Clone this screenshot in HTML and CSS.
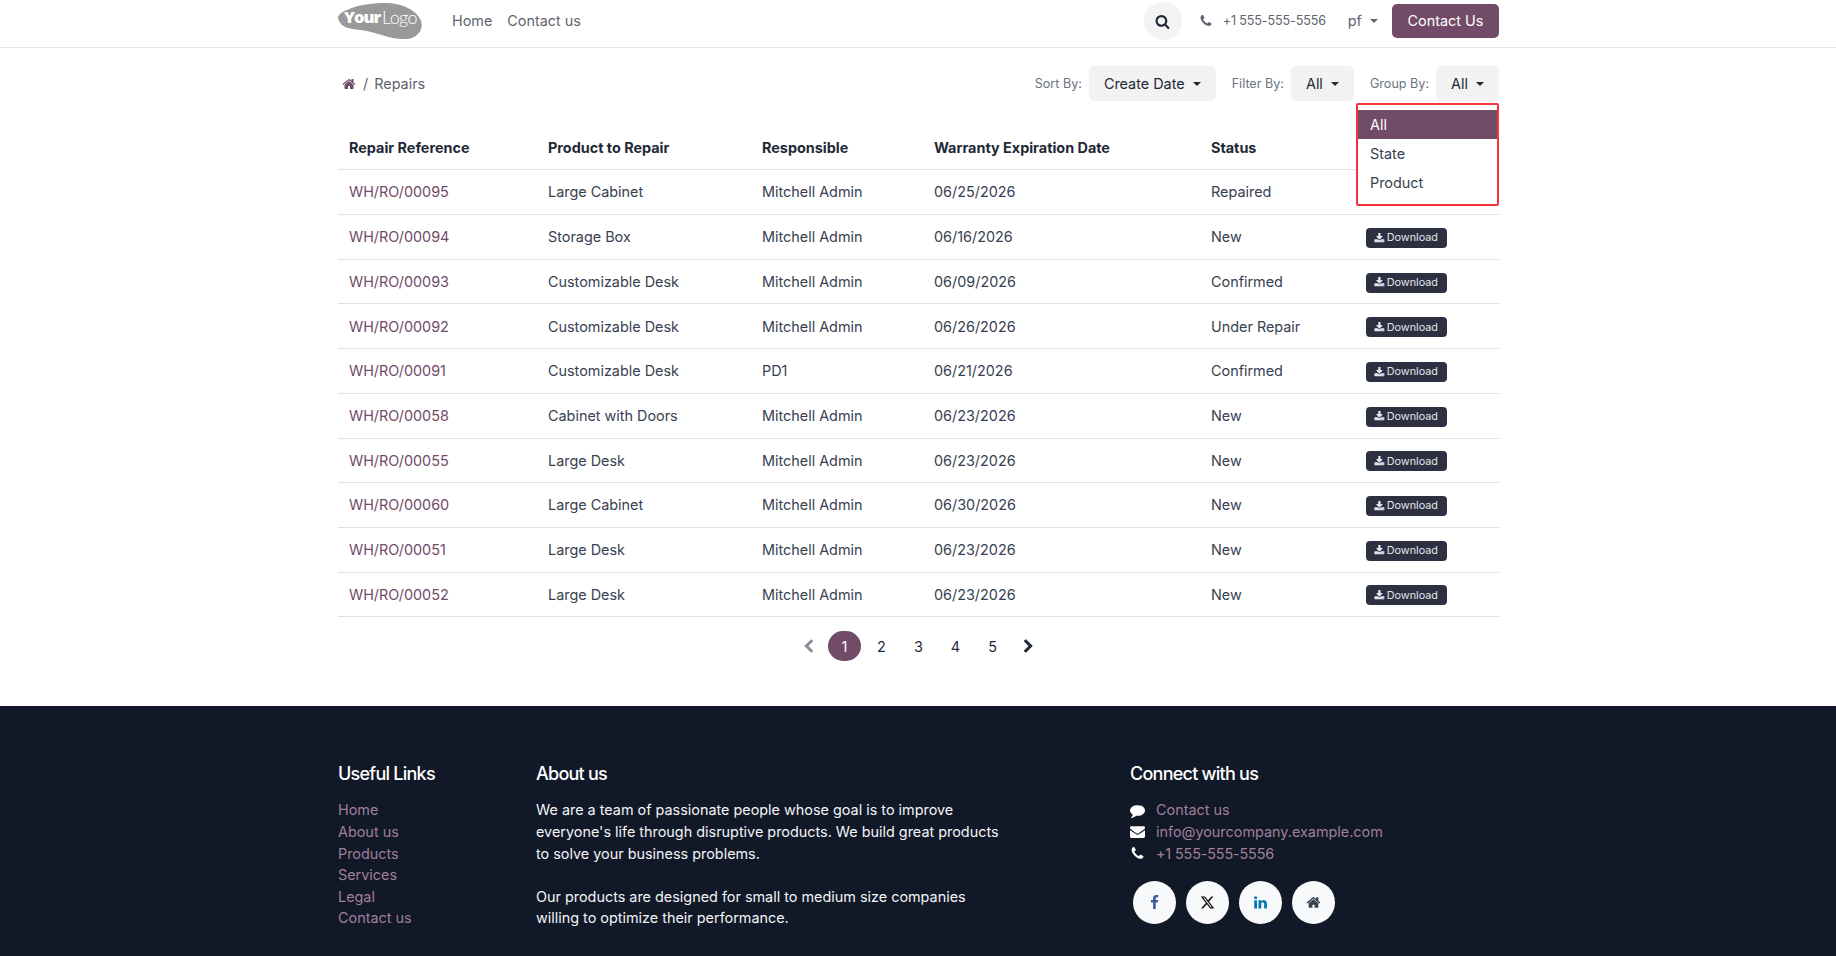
FILE: index.html
```html
<!DOCTYPE html>
<html lang="en">
<head>
    <meta charset="UTF-8">
    <title>Repairs</title>
    <link rel="stylesheet" href="styles.css">
</head>
<body>
    <svg class="sprite">
        <symbol id="i-home" viewBox="0 0 1792 1792"><path d="M1472 992v480q0 26-19 45t-45 19h-384v-384h-256v384h-384q-26 0-45-19t-19-45v-480q0-1 .5-3t.5-3l575-474 575 474q1 2 1 6zm223-69l-62 74q-8 9-21 11h-3q-13 0-21-7l-692-577-692 577q-12 8-24 7-13-2-21-11l-62-74q-8-10-7-23.500t11-21.500l719-599q32-26 76-26t76 26l244 204v-195q0-14 9-23t23-9h192q14 0 23 9t9 23v408l219 182q10 8 11 21.500t-7 23.500z"/></symbol>
        <symbol id="i-phone" viewBox="0 0 1792 1792"><path d="M1600 1240q0 27-10 70.500t-21 68.500q-21 50-122 106-94 51-186 51-27 0-53-3.500t-57.500-12.500-47-14.500-55.500-20.500-49-18q-98-35-175-83-127-79-264-216t-216-264q-48-77-83-175-3-9-18-49t-20.500-55.500-14.500-47-12.500-57.500-3.500-53q0-92 51-186 56-101 106-122 25-11 68.500-21t70.500-10q14 0 21 3 18 6 53 76 11 19 30 54t35 63.500 31 53.500q3 4 17.500 25t21.500 35.500 7 28.500q0 20-28.500 50t-62 55-62 53-28.500 46q0 9 5 22.500t8.500 20.500 14 24 11.500 19q76 137 174 235t235 174q2 1 19 11.500t24 14 20.500 8.500 22.500 5q18 0 46-28.500t53-62 55-62 50-28.500q14 0 28.500 7t35.500 21.500 25 17.500q25 15 53.500 31t63.500 35 54 30q70 35 76 53 3 7 3 21z"/></symbol>
        <symbol id="i-search" viewBox="0 0 1792 1792"><path d="M1216 832q0-185-131.500-316.500t-316.500-131.500-316.500 131.500-131.500 316.500 131.500 316.500 316.500 131.500 316.500-131.500 131.500-316.500zm512 832q0 52-38 90t-90 38q-54 0-90-38l-343-342q-179 124-399 124-143 0-273.500-55.500t-225-150-150-225-55.500-273.500 55.500-273.500 150-225 225-150 273.500-55.500 273.500 55.500 225 150 150 225 55.500 273.500q0 220-124 399l343 343q37 37 37 90z"/></symbol>
        <symbol id="i-download" viewBox="0 0 1792 1792"><path d="M1344 1344q0-26-19-45t-45-19-45 19-19 45 19 45 45 19 45-19 19-45zm256 0q0-26-19-45t-45-19-45 19-19 45 19 45 45 19 45-19 19-45zm128-224v320q0 40-28 68t-68 28h-1472q-40 0-68-28t-28-68v-320q0-40 28-68t68-28h465l135 136q58 56 136 56t136-56l136-136h464q40 0 68 28t28 68zm-325-569q17 41-14 70l-448 448q-18 19-45 19t-45-19l-448-448q-31-29-14-70 17-39 59-39h256v-448q0-26 19-45t45-19h256q26 0 45 19t19 45v448h256q42 0 59 39z"/></symbol>
    </svg>

    <header class="topbar">
        <div class="container topbar-row">
            <svg class="logo" viewBox="0 0 85 36">
                <path class="logo-blob" d="M0 14C2 10 5 8 9 7 20 2 33 0 47 0c17 0 32 7 36 18 3 9-4 17-14 18-13 1-24-4-36-7C22 26 9 27 4 22 2 20 0 17 0 14z"/>
                <text class="logo-your" x="6" y="20">Your</text>
                <text class="logo-logo" x="44" y="21">Logo</text>
            </svg>
            <nav class="topnav">
                <a href="#">Home</a>
                <a href="#">Contact us</a>
            </nav>
            <div class="topbar-right">
                <span class="search-btn"><svg class="icon"><use href="#i-search"/></svg></span>
                <svg class="icon phone-icon"><use href="#i-phone"/></svg>
                <span class="phone">+1 555-555-5556</span>
                <span class="lang">pf <i class="caret"></i></span>
                <a class="contact-btn" href="#">Contact Us</a>
            </div>
        </div>
    </header>

    <main class="container main">
        <div class="toolbar">
            <div class="breadcrumb">
                <svg class="icon home-icon"><use href="#i-home"/></svg>
                <span class="sep">/</span>
                <span>Repairs</span>
            </div>
            <div class="filters">
                <span class="filter-label">Sort By:</span>
                <span class="filter-btn">Create Date <i class="caret"></i></span>
                <span class="filter-label gap">Filter By:</span>
                <span class="filter-btn">All <i class="caret"></i></span>
                <span class="filter-label gap">Group By:</span>
                <span class="filter-btn">All <i class="caret"></i></span>
            </div>
            <ul class="dropdown">
                <li class="active">All</li>
                <li>State</li>
                <li>Product</li>
            </ul>
        </div>

        <table class="repairs">
            <thead>
                <tr>
                    <th class="c1">Repair Reference</th>
                    <th class="c2">Product to Repair</th>
                    <th class="c3">Responsible</th>
                    <th class="c4">Warranty Expiration Date</th>
                    <th class="c5">Status</th>
                    <th></th>
                </tr>
            </thead>
            <tbody>
                <tr><td><a href="#">WH/RO/00095</a></td><td>Large Cabinet</td><td>Mitchell Admin</td><td>06/25/2026</td><td>Repaired</td><td></td></tr>
                <tr><td><a href="#">WH/RO/00094</a></td><td>Storage Box</td><td>Mitchell Admin</td><td>06/16/2026</td><td>New</td><td><a class="dl" href="#"><svg class="icon"><use href="#i-download"/></svg>Download</a></td></tr>
                <tr><td><a href="#">WH/RO/00093</a></td><td>Customizable Desk</td><td>Mitchell Admin</td><td>06/09/2026</td><td>Confirmed</td><td><a class="dl" href="#"><svg class="icon"><use href="#i-download"/></svg>Download</a></td></tr>
                <tr><td><a href="#">WH/RO/00092</a></td><td>Customizable Desk</td><td>Mitchell Admin</td><td>06/26/2026</td><td>Under Repair</td><td><a class="dl" href="#"><svg class="icon"><use href="#i-download"/></svg>Download</a></td></tr>
                <tr><td><a href="#">WH/RO/00091</a></td><td>Customizable Desk</td><td>PD1</td><td>06/21/2026</td><td>Confirmed</td><td><a class="dl" href="#"><svg class="icon"><use href="#i-download"/></svg>Download</a></td></tr>
                <tr><td><a href="#">WH/RO/00058</a></td><td>Cabinet with Doors</td><td>Mitchell Admin</td><td>06/23/2026</td><td>New</td><td><a class="dl" href="#"><svg class="icon"><use href="#i-download"/></svg>Download</a></td></tr>
                <tr><td><a href="#">WH/RO/00055</a></td><td>Large Desk</td><td>Mitchell Admin</td><td>06/23/2026</td><td>New</td><td><a class="dl" href="#"><svg class="icon"><use href="#i-download"/></svg>Download</a></td></tr>
                <tr><td><a href="#">WH/RO/00060</a></td><td>Large Cabinet</td><td>Mitchell Admin</td><td>06/30/2026</td><td>New</td><td><a class="dl" href="#"><svg class="icon"><use href="#i-download"/></svg>Download</a></td></tr>
                <tr><td><a href="#">WH/RO/00051</a></td><td>Large Desk</td><td>Mitchell Admin</td><td>06/23/2026</td><td>New</td><td><a class="dl" href="#"><svg class="icon"><use href="#i-download"/></svg>Download</a></td></tr>
                <tr><td><a href="#">WH/RO/00052</a></td><td>Large Desk</td><td>Mitchell Admin</td><td>06/23/2026</td><td>New</td><td><a class="dl" href="#"><svg class="icon"><use href="#i-download"/></svg>Download</a></td></tr>
            </tbody>
        </table>

        <div class="pager">
            <svg class="chev prev" viewBox="0 0 1792 1792"><path d="M1427 301l-531 531 531 531q19 19 19 45t-19 45l-166 166q-19 19-45 19t-45-19l-742-742q-19-19-19-45t19-45l742-742q19-19 45-19t45 19l166 166q19 19 19 45t-19 45z"/></svg>
            <span class="page current">1</span>
            <span class="page">2</span>
            <span class="page">3</span>
            <span class="page">4</span>
            <span class="page">5</span>
            <svg class="chev" viewBox="0 0 1792 1792"><path d="M1363 877l-742 742q-19 19-45 19t-45-19l-166-166q-19-19-19-45t19-45l531-531-531-531q-19-19-19-45t19-45l166-166q19-19 45-19t45 19l742 742q19 19 19 45t-19 45z"/></svg>
        </div>
    </main>

    <footer class="footer">
        <div class="container footer-grid">
            <div>
                <h5>Useful Links</h5>
                <ul class="links">
                    <li><a href="#">Home</a></li>
                    <li><a href="#">About us</a></li>
                    <li><a href="#">Products</a></li>
                    <li><a href="#">Services</a></li>
                    <li><a href="#">Legal</a></li>
                    <li><a href="#">Contact us</a></li>
                </ul>
            </div>
            <div>
                <h5>About us</h5>
                <p>We are a team of passionate people whose goal is to improve<br>everyone's life through disruptive products. We build great products<br>to solve your business problems.</p>
                <p>Our products are designed for small to medium size companies<br>willing to optimize their performance.</p>
            </div>
            <div>
                <h5>Connect with us</h5>
                <ul class="links contact">
                    <li><svg class="icon" viewBox="0 0 1792 1792"><path d="M1792 896q0 174-120 321.500t-326 233-450 85.500q-70 0-145-8-198 175-460 242-49 14-114 22-17 2-30.500-9t-17.500-29v-1q-3-4-.5-12t2-10 4.500-9.500l6-9 7-8.500 8-9q7-8 31-34.500t34.500-38 31-39.500 32.500-51 27-59 26-76q-157-89-247.500-220t-90.500-281q0-130 71-248.500t191-204.500 286-136.500 348-50.500q244 0 450 85.500t326 233 120 321.500z"/></svg><a href="#">Contact us</a></li>
                    <li><svg class="icon" viewBox="0 0 1792 1792"><path d="M1792 710v794q0 66-47 113t-113 47h-1472q-66 0-113-47t-47-113v-794q44 49 101 87 362 246 497 345 57 42 92.500 65.500t94.500 48 110 24.500h2q51 0 110-24.500t94.500-48 92.500-65.500q170-123 498-345 57-39 100-87zm0-294q0 79-49 151t-122 123q-376 261-468 325-10 7-42.500 30.500t-54 38-52 32.500-57.500 27-50 9h-2q-23 0-50-9t-57.500-27-52-32.500-54-38-42.500-30.500q-91-64-262-182.500t-205-142.500q-62-42-117-115.500t-55-136.500q0-78 41.500-130t118.500-52h1472q65 0 112.500 47t47.500 113z"/></svg><a href="#">info@yourcompany.example.com</a></li>
                    <li><svg class="icon"><use href="#i-phone"/></svg><a class="tel" href="#">+1 555-555-5556</a></li>
                </ul>
                <div class="social">
                    <span class="fb"><svg class="icon" viewBox="0 0 1792 1792"><path d="M1343 12v264h-157q-86 0-116 36t-30 108v189h293l-39 296h-254v759h-306v-759h-255v-296h255v-218q0-186 104-288.500t277-102.500q147 0 228 12z"/></svg></span>
                    <span class="tw"><svg class="icon" viewBox="0 0 24 24"><path d="M18.244 2.25h3.308l-7.227 8.26 8.502 11.24H16.17l-5.214-6.817L4.99 21.75H1.68l7.73-8.835L1.254 2.25H8.08l4.713 6.231zm-1.161 17.52h1.833L7.084 4.126H5.117z"/></svg></span>
                    <span class="li"><svg class="icon" viewBox="0 0 1792 1792"><path d="M477 625v991h-330v-991h330zm21-306q1 73-50.500 122t-135.500 49h-2q-82 0-132-49t-50-122q0-74 51.500-122.500t134.500-48.500 133 48.500 51 122.500zm1166 729v568h-329v-530q0-105-40.500-164.500t-126.500-59.500q-63 0-105.500 34.500t-63.500 85.500q-11 30-11 81v553h-329q2-399 2-647t-1-296l-1-48h329v144h-2q20-32 41-56t56.500-52 87-43.500 114.500-15.500q171 0 275 113.500t104 332.500z"/></svg></span>
                    <span class="hm"><svg class="icon"><use href="#i-home"/></svg></span>
                </div>
            </div>
        </div>
    </footer>
</body>
</html>
```

FILE: styles.css
```css
* { box-sizing: border-box; }
html, body { margin: 0; padding: 0; }
body { font-family: Inter, "Liberation Sans", sans-serif; font-size: 14.4px; line-height: 21.6px; color: #374151; background: white; }
a { color: inherit; text-decoration: none; }
ul { list-style: none; margin: 0; padding: 0; }
.sprite { display: none; }
.icon { width: 1em; height: 1em; fill: currentColor; display: inline-block; }
.container { width: 1161px; margin-left: 338px; }
.caret { display: inline-block; width: 0; height: 0; margin-left: 5px; vertical-align: 3px; border-top: 4px solid currentColor; border-left: 4px solid transparent; border-right: 4px solid transparent; }

.topbar { height: 48px; border-bottom: 1px solid #e9e9e9; }
.topbar-row { display: flex; align-items: center; height: 42px; }
.logo { width: 85px; height: 36px; flex: none; }
.logo-blob { fill: #999; }
.logo-your { font-family: "Open Sans", sans-serif; font-weight: 800; font-size: 16.5px; letter-spacing: -1px; fill: white; }
.logo-logo { font-family: Lato, sans-serif; font-weight: 300; font-size: 18px; letter-spacing: -.6px; fill: white; }
.topnav { display: flex; gap: 15px; margin-left: 29px; color: #5f6470; }
.topbar-right { margin-left: auto; display: flex; align-items: center; color: #5f6470; }
.search-btn { width: 38px; height: 38px; border-radius: 50%; background: #f3f3f3; color: #1f2937; display: flex; align-items: center; justify-content: center; font-size: 15px; }
.phone-icon { font-size: 14px; margin-left: 17px; }
.phone { font-size: 12.6px; margin-left: 10px; letter-spacing: -.15px; }
.lang { margin-left: 22px; }
.lang .caret { margin-left: 4px; }
.contact-btn { margin-left: 14px; width: 107px; height: 34px; border-radius: 5px; background: #714b67; color: white; display: flex; align-items: center; justify-content: center; }

.toolbar { position: relative; display: flex; align-items: center; justify-content: space-between; height: 35px; margin-top: 18px; }
.breadcrumb { display: flex; align-items: center; padding-left: 4px; color: #5f6470; }
.home-icon { color: #714b67; font-size: 14px; }
.sep { margin: 0 6px 0 7px; }
.filters { display: flex; align-items: center; }
.filter-label { font-size: 12.6px; color: #6b7280; margin-right: 7px; }
.filter-label.gap { margin-left: 16px; }
.filter-btn { height: 35px; padding: 0 15px; display: flex; align-items: center; white-space: pre; background: #f2f2f2; border-radius: 5px; color: #1f2937; }
.filter-btn .caret { margin-left: 4px; }
.dropdown { position: absolute; z-index: 2; top: 37px; right: 0; width: 143px; height: 103px; padding-top: 5px; background: white; border: 2px solid #f5333f; border-radius: 2px; color: #374151; }
.dropdown li { height: 29px; padding-left: 12px; display: flex; align-items: center; }
.dropdown .active { background: #714b67; color: white; }

.repairs { width: 100%; border-collapse: collapse; table-layout: fixed; margin-top: 23.9px; }
.repairs th { height: 45px; padding: 2px 11px 0; text-align: left; font-weight: 700; color: #1f2937; }
.repairs td { height: 44.7px; padding: 0 11px; border-top: 1px solid #dee2e6; }
.repairs tbody tr:last-child td { border-bottom: 1px solid #dee2e6; }
.repairs td a { color: #714b67; }
.c1 { width: 199px; }
.c2 { width: 214px; }
.c3 { width: 172px; }
.c4 { width: 277px; }
.c5 { width: 155px; }
.repairs td .dl { display: inline-flex; align-items: center; gap: 2px; height: 20px; width: 81px; padding: 0 8px; border-radius: 4px; background: #2c3040; color: #e5e7eb; font-size: 10.8px; vertical-align: middle; }

.pager { display: flex; align-items: center; justify-content: center; height: 30px; margin-top: 14.1px; color: #1f2937; }
.page { width: 33px; height: 30px; margin: 0 2px; border-radius: 15px; display: flex; align-items: center; justify-content: center; }
.page.current { background: #714b67; color: white; }
.chev { width: 15px; height: 15px; fill: currentColor; margin: 0 10px; }
.chev.prev { color: #8a9099; }

.footer { margin-top: 45px; height: 252px; background: #111827; color: #f3f4f6; overflow: hidden; }
.footer-grid { display: grid; grid-template-columns: 198px 594px 1fr; padding-top: 57px; }
.footer h5 { margin: 0 0 14px; font-size: 18px; line-height: 22px; font-weight: 500; color: white; letter-spacing: -.75px; }
.footer p { margin: 0 0 21.6px; }
.links a { color: #a07f99; }
.links li { height: 21.6px; }
.contact li { display: flex; align-items: center; }
.contact .icon { font-size: 15px; width: 15px; margin-right: 11px; color: white; }
.contact .tel { letter-spacing: -.15px; }
.social { display: flex; gap: 10px; margin: 17px 0 0 3px; }
.social span { width: 43px; height: 43px; border-radius: 50%; background: #f8f9fa; display: flex; align-items: center; justify-content: center; font-size: 15px; }
.fb { color: #3b5998; }
.tw { color: #111; }
.li { color: #0077b5; }
.hm { color: #374151; }
```
